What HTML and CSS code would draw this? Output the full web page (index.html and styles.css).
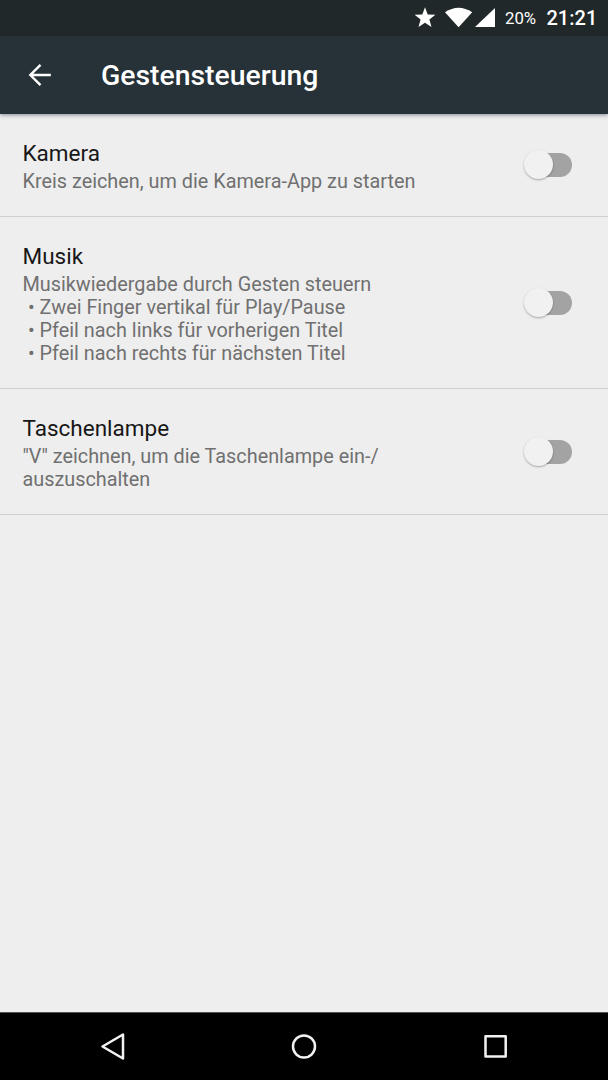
FILE: index.html
```html
<!DOCTYPE html>
<html lang="de">
<head>
<meta charset="utf-8">
<title>Gestensteuerung</title>
<link rel="stylesheet" href="styles.css">
</head>
<body>
<div class="screen">
  <div class="status-bar">
    <svg class="status-icons" width="84" height="36" viewBox="412 0 84 36" fill="#fff">
      <path d="M425 7.200l2.700 7.200 7.700.3-6 4.800 2.100 7.500-6.500-4.300-6.500 4.300 2.100-7.500-6-4.800 7.700-.3z"/>
      <path d="M445 12.300Q458.500 3 472.200 12.300L458.600 27.300z"/>
      <path d="M495 8v19h-20z"/>
    </svg>
    <span class="battery">20%</span>
    <span class="clock">21:21</span>
  </div>
  <header class="app-bar">
    <svg class="back" width="24" height="24" viewBox="0 0 24 24" fill="none" stroke="#fff" stroke-width="2.4"><path d="M23.800 12H3M13.500 1.800L3.300 12l10.200 10.200"/></svg>
    <h1 class="heading">Gestensteuerung</h1>
  </header>
  <main class="settings">
    <section class="row row-camera">
      <div class="copy">
        <h2 class="title">Kamera</h2>
        <p class="summary">Kreis zeichen, um die Kamera-App zu starten</p>
      </div>
      <div class="switch"><span class="thumb"></span></div>
    </section>
    <section class="row row-music">
      <div class="copy">
        <h2 class="title">Musik</h2>
        <p class="summary">Musikwiedergabe durch Gesten steuern</p>
        <p class="summary bullet">• Zwei Finger vertikal für Play/Pause</p>
        <p class="summary bullet">• Pfeil nach links für vorherigen Titel</p>
        <p class="summary bullet">• Pfeil nach rechts für nächsten Titel</p>
      </div>
      <div class="switch"><span class="thumb"></span></div>
    </section>
    <section class="row row-torch">
      <div class="copy">
        <h2 class="title">Taschenlampe</h2>
        <p class="summary">"V" zeichnen, um die Taschenlampe ein-/<br>auszuschalten</p>
      </div>
      <div class="switch"><span class="thumb"></span></div>
    </section>
  </main>
  <nav class="nav-bar">
    <svg width="608" height="67" viewBox="0 1013 608 67" fill="none" stroke="#f2f2f2" stroke-width="2.500" stroke-linejoin="round">
      <path d="M102.500 1046.500L123 1034.500v24z"/>
      <circle cx="304" cy="1046.500" r="11"/>
      <path d="M485.500 1036.200h20.200v20.200h-20.200z"/>
    </svg>
  </nav>
</div>
</body>
</html>
```
FILE: styles.css
```css
* { box-sizing: border-box; }
body { margin: 0; background: #eee; font-family: Roboto, "Liberation Sans", sans-serif; }
h1, h2, p { margin: 0; font-weight: 400; }
.screen { width: 608px; height: 1080px; display: flex; flex-direction: column; overflow: hidden; background: #eee; }
.status-bar { height: 36px; flex: none; display: flex; align-items: center; padding-right: 11.500px; justify-content: flex-end; background: #212829; color: #fff; }
.status-icons { margin-right: .5px; }
.battery { width: 42px; padding-left: 8.500px; font-size: 16.800px; line-height: 36px; white-space: nowrap; }
.clock { width: 50px; margin-left: 8px; font-size: 20px; font-weight: 500; line-height: 36px; white-space: nowrap; }
.app-bar { height: 78px; flex: none; display: flex; align-items: center; padding-left: 27px; background: #263238; box-shadow: 0 1px 4px rgba(30, 40, 60, .5); z-index: 1; }
.back { flex: none; }
.heading { margin-left: 50px; padding-top: 2px; color: #fff; font-size: 28.350px; font-weight: 500; line-height: 32px; }
.settings { flex: 1; }
.row { display: flex; align-items: center; justify-content: space-between; padding: 0 36px 0 22.500px; border-bottom: 1px solid #cfcfcf; }
.row-camera { height: 103px; }
.row-music { height: 172px; }
.row-torch { height: 126px; }
.title { padding-bottom: 2px; color: #171717; font-size: 22.500px; line-height: 30px; }
.summary { color: #707070; font-size: 19.840px; line-height: 23px; white-space: nowrap; }
.bullet { padding-left: 5.500px; }
.switch { position: relative; width: 43px; height: 24px; flex: none; border-radius: 12px; background: #a3a3a3; }
.thumb { position: absolute; left: -5px; top: -3px; width: 29px; height: 29px; border-radius: 50%; background: #f1f1f1; box-shadow: 0 1px 2px rgba(0, 0, 0, .3); }
.nav-bar { height: 68px; flex: none; border-top: 1px solid #555; background: #000; }
.nav-bar svg { display: block; }
```
